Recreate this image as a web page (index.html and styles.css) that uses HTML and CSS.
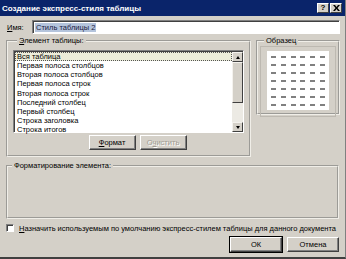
FILE: index.html
```html
<!DOCTYPE html>
<html lang="ru">
<head>
  <meta charset="UTF-8" />
  <title>Создание экспресс-стиля таблицы</title>
  <link rel="stylesheet" href="styles.css">
</head>
<body>
  <div class="dialog">
    <div class="titlebar">
      <span class="title">Создание экспресс-стиля таблицы</span>
      <div class="caption-btns">
        <span class="cap-btn">?</span>
        <span class="cap-btn">
          <svg width="7" height="6" viewBox="0 0 7 6"><path d="M0 0h2l1.5 2L5 0h2L4.5 3 7 6H5L3.5 4 2 6H0l2.5-3z" fill="#000"/></svg>
        </span>
      </div>
    </div>

    <div class="content">
      <div class="name-row">
        <label class="name-label"><u>И</u>мя:</label>
        <div class="input"><span class="selected-text">Стиль таблицы 2</span></div>
      </div>

      <div class="main-row">
        <fieldset class="group elements">
          <legend><u>Э</u>лемент таблицы:</legend>
          <div class="listbox">
            <ul class="items">
              <li class="current">Вся таблица</li>
              <li>Первая полоса столбцов</li>
              <li>Вторая полоса столбцов</li>
              <li>Первая полоса строк</li>
              <li>Вторая полоса строк</li>
              <li>Последний столбец</li>
              <li>Первый столбец</li>
              <li>Строка заголовка</li>
              <li>Строка итогов</li>
            </ul>
            <div class="scrollbar">
              <span class="sb-btn"><span class="arrow up"></span></span>
              <span class="sb-thumb"></span>
              <span class="sb-track"></span>
              <span class="sb-btn"><span class="arrow down"></span></span>
            </div>
          </div>
          <div class="list-btns">
            <button class="btn"><u>Ф</u>ормат</button>
            <button class="btn" disabled>О<u>ч</u>истить</button>
          </div>
        </fieldset>

        <fieldset class="group sample">
          <legend>Образец</legend>
          <div class="sample-panel">
            <div class="preview">
              <i></i><i></i><i></i><i></i><i></i><i></i>
              <i></i><i></i><i></i><i></i><i></i><i></i>
              <i></i><i></i><i></i><i></i><i></i><i></i>
              <i></i><i></i><i></i><i></i><i></i><i></i>
              <i></i><i></i><i></i><i></i><i></i><i></i>
              <i></i><i></i><i></i><i></i><i></i><i></i>
              <i></i><i></i><i></i><i></i><i></i><i></i>
            </div>
          </div>
        </fieldset>
      </div>

      <fieldset class="group formatting">
        <legend>Форматирование элемента:</legend>
      </fieldset>

      <label class="check-row">
        <span class="checkbox"></span>
        <span><u>Н</u>азначить используемым по умолчанию экспресс-стилем таблицы для данного документа</span>
      </label>

      <div class="footer">
        <button class="btn default">ОК</button>
        <button class="btn">Отмена</button>
      </div>
    </div>
  </div>
</body>
</html>
```

FILE: styles.css
```css
body {
  margin: 0;
  width: 346px;
  height: 259px;
  overflow: hidden;
  font-family: "Liberation Sans", Arial, sans-serif;
  font-size: 7.5px;
  color: #000;
  background: #d4d0c8;
}
.dialog {
  height: 259px;
  box-sizing: border-box;
  background: #d4d0c8;
  border-bottom: 2px solid #404040;
  border-right: 1px solid #808080;
  display: flex;
  flex-direction: column;
}
.titlebar {
  height: 16px;
  background: #0a246a;
  display: flex;
  align-items: center;
  justify-content: space-between;
  padding: 0 3px 0 2px;
}
.title {
  color: #fff;
  font-weight: bold;
  font-size: 8px;
}
.caption-btns {
  display: flex;
  gap: 1px;
}
.cap-btn {
  width: 12px;
  height: 10px;
  box-sizing: border-box;
  background: #d4d0c8;
  border: 1px solid;
  border-color: #fff #404040 #404040 #fff;
  display: flex;
  align-items: center;
  justify-content: center;
  font-weight: bold;
  font-size: 8px;
  line-height: 1;
}
.content {
  flex: 1;
  padding: 4px 5px 0 6px;
  display: flex;
  flex-direction: column;
}
.name-row {
  display: flex;
  align-items: center;
  height: 14px;
}
.name-label {
  width: 25px;
  padding-left: 1px;
}
.input {
  flex: 1;
  height: 14px;
  box-sizing: border-box;
  background: #fff;
  border: 1px solid;
  border-color: #808080 #fff #fff #808080;
  box-shadow: inset 1px 1px #404040;
  padding: 2px 0 0 2px;
}
.selected-text {
  background: #b4c4dc;
  color: #1a1a40;
  padding: 0 1px;
}
.main-row {
  display: flex;
  gap: 5px;
  margin-top: 2px;
  align-items: flex-start;
}
.group {
  margin: 0;
  border: 2px groove #f0eee8;
  padding: 0;
}
.group legend {
  padding: 0 2px;
  margin-left: 4px;
  line-height: 9px;
}
.elements {
  width: 245px;
  box-sizing: border-box;
  height: 121px;
  padding: 5px 5px 0 5px;
}
.listbox {
  height: 83px;
  box-sizing: border-box;
  background: #fff;
  border: 1px solid;
  border-color: #808080 #fff #fff #808080;
  box-shadow: inset 1px 1px #404040;
  display: flex;
  padding: 1px 0 0 1px;
}
.items {
  list-style: none;
  margin: 0;
  padding: 0;
  flex: 1;
}
.items li {
  height: 9.15px;
  line-height: 9px;
  padding-left: 2px;
}
.items .current {
  background: #ecedd9;
  outline: 1px dotted #555;
  outline-offset: -1px;
}
.scrollbar {
  width: 11px;
  display: flex;
  flex-direction: column;
}
.sb-btn, .sb-thumb {
  background: #d4d0c8;
  border: 1px solid;
  border-color: #f4f2ee #404040 #404040 #f4f2ee;
  box-sizing: border-box;
}
.sb-btn {
  height: 10px;
  display: flex;
  align-items: center;
  justify-content: center;
}
.sb-thumb {
  height: 41px;
}
.sb-track {
  flex: 1;
  background: #eceae4;
}
.arrow {
  width: 0;
  height: 0;
  border-left: 2.5px solid transparent;
  border-right: 2.5px solid transparent;
}
.arrow.up {
  border-bottom: 3px solid #000;
}
.arrow.down {
  border-top: 3px solid #000;
}
.list-btns {
  display: flex;
  justify-content: center;
  gap: 4px;
  margin-top: 2px;
  padding-left: 18px;
}
.btn {
  font-family: inherit;
  font-size: 7.5px;
  background: #d4d0c8;
  color: #000;
  border: 1px solid;
  border-color: #fff #404040 #404040 #fff;
  box-shadow: inset -1px -1px #808080;
  height: 15px;
  width: 47px;
  padding: 0;
}
.btn:disabled {
  color: #a09c94;
  text-shadow: 1px 1px #fff;
}
.sample {
  flex: 1;
  height: 79px;
  box-sizing: border-box;
  padding: 1px 2px 2px 2px;
}
.sample-panel {
  border: 1px solid #bdb9b1;
  padding: 4px 6px 6px 6px;
}
.preview {
  background: #fff;
  height: 59px;
  display: grid;
  grid-template-columns: repeat(6, 1fr);
  grid-template-rows: repeat(7, 1fr);
  padding: 2px 2px 1px 2px;
  box-sizing: border-box;
  place-items: center;
}
.preview i {
  width: 5px;
  height: 2px;
  background: #808080;
}
.formatting {
  height: 58px;
  box-sizing: border-box;
  margin-top: 4px;
  margin-right: 1px;
}
.check-row {
  display: flex;
  align-items: center;
  gap: 5px;
  margin-top: 4px;
  height: 10px;
}
.checkbox {
  width: 8px;
  height: 8px;
  box-sizing: border-box;
  background: #fff;
  border: 1px solid;
  border-color: #808080 #fff #fff #808080;
  box-shadow: inset 1px 1px #404040;
}
.footer {
  display: flex;
  justify-content: flex-end;
  gap: 5px;
  margin-top: 4px;
  margin-right: 1px;
}
.footer .btn {
  width: 52px;
}
.btn.default {
  outline: 1px solid #000;
  outline-offset: 0;
}
```
